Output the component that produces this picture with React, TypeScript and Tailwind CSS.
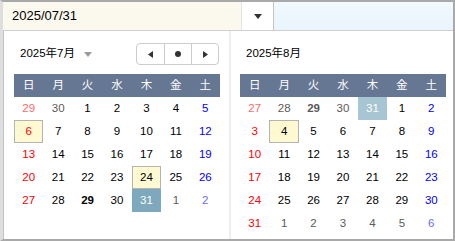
type Day = {
  n: number;
  kind?: "prev" | "next";
  bold?: boolean;
  box?: boolean;
  sel?: "dark" | "light";
};

const weekdays = ["日", "月", "火", "水", "木", "金", "土"];

const july: Day[] = [
  { n: 29, kind: "prev" },
  { n: 30, kind: "prev" },
  ...Array.from({ length: 31 }, (_, i) => ({ n: i + 1 }) as Day),
  { n: 1, kind: "next" },
  { n: 2, kind: "next" },
].map((d) => {
  if (!d.kind && d.n === 6) return { ...d, box: true };
  if (!d.kind && d.n === 24) return { ...d, box: true };
  if (!d.kind && d.n === 29) return { ...d, bold: true };
  if (!d.kind && d.n === 31) return { ...d, sel: "dark" as const };
  return d;
});

const august: Day[] = [
  { n: 27, kind: "prev" },
  { n: 28, kind: "prev" },
  { n: 29, kind: "prev", bold: true },
  { n: 30, kind: "prev" },
  { n: 31, kind: "prev", sel: "light" },
  ...Array.from({ length: 31 }, (_, i) => ({ n: i + 1 }) as Day),
  ...[1, 2, 3, 4, 5, 6].map((n) => ({ n, kind: "next" }) as Day),
].map((d) => (!d.kind && d.n === 4 ? { ...d, box: true } : d));

const dayColor = (d: Day, col: number) => {
  if (d.sel) return "text-white";
  const other = !!d.kind;
  if (col === 0) return other ? "text-[#ff6b6b]" : "text-[#ff0000]";
  if (col === 6) return other ? "text-[#6b6bff]" : "text-[#0000ff]";
  return other ? "text-[#5a5a5a]" : "text-black";
};

const Grid = ({ days }: { days: Day[] }) => (
  <div className="w-[206px]">
    <div className="grid grid-cols-7 h-[23px] bg-[#667794] text-white">
      {weekdays.map((w) => (
        <div key={w} className="flex items-center justify-center">
          {w}
        </div>
      ))}
    </div>
    <div className="grid grid-cols-7">
      {days.map((d, i) => {
        const col = i % 7;
        let bg = "";
        if (d.box) bg = "bg-[#fff9d1] border border-[#b4b4b4]";
        if (d.sel === "dark") bg = "bg-[#7ea8bd]";
        if (d.sel === "light") bg = "bg-[#a8c5d3]";
        return (
          <div
            key={i}
            className={`h-[23px] flex items-center justify-center ${bg} ${dayColor(d, col)} ${d.bold ? "font-bold" : ""}`}
          >
            {d.n}
          </div>
        );
      })}
    </div>
  </div>
);

export default function App() {
  return (
    <div
      className="w-[455px] h-[241px] bg-white border-t-2 border-r-2 border-b-2 border-l-[3px] border-[#a9a9a9] border-l-[#dedede] text-[11.5px] text-black"
      style={{ fontFamily: '"Liberation Sans", "Noto Sans CJK JP", sans-serif' }}
    >
      {/* input bar */}
      <div className="flex h-[29px] border-b border-[#cfcfcf]">
        <div className="w-[238px] bg-[#fbf8ee] flex items-center pl-[9px] text-[13px]">
          2025/07/31
        </div>
        <div className="w-[32px] bg-white border-l border-[#e4e4e4] flex items-center justify-center">
          <svg width="8" height="5" viewBox="0 0 8 5">
            <path d="M0 0H8L4 5Z" fill="#333" />
          </svg>
        </div>
        <div className="flex-1 border-l border-[#c4c4c4] bg-gradient-to-b from-[#f2f9ff] to-[#e9f4fc]" />
      </div>

      {/* popup */}
      <div className="flex h-[208px] border-l border-[#c2c2c2]">
        <div className="w-[225px] pl-[10px] pt-[12px]">
          <div className="flex items-center justify-between w-[206px] h-[22px] mb-[9px]">
            <div className="flex items-center gap-[9px] pl-[6px]">
              <span>2025年7月</span>
              <svg width="8" height="5" viewBox="0 0 8 5">
                <path d="M0 0H8L4 5Z" fill="#9a9a9a" />
              </svg>
            </div>
            <div className="flex h-[22px] border border-[#cccccc] rounded-[4px] mr-[1px]">
              <div className="w-[28px] flex items-center justify-center border-r border-[#cccccc]">
                <svg width="5" height="7" viewBox="0 0 5 7">
                  <path d="M5 0V7L0 3.5Z" fill="#333" />
                </svg>
              </div>
              <div className="w-[27px] flex items-center justify-center border-r border-[#cccccc]">
                <div className="w-[6px] h-[6px] rounded-full bg-[#333]" />
              </div>
              <div className="w-[26px] flex items-center justify-center">
                <svg width="5" height="7" viewBox="0 0 5 7">
                  <path d="M0 0V7L5 3.5Z" fill="#333" />
                </svg>
              </div>
            </div>
          </div>
          <Grid days={july} />
        </div>

        <div className="w-[2px] bg-[#eeeeee]" />

        <div className="flex-1 pl-[9px] pt-[12px]">
          <div className="flex items-center h-[22px] mb-[9px] pl-[6px]">2025年8月</div>
          <Grid days={august} />
        </div>
      </div>
    </div>
  );
}
